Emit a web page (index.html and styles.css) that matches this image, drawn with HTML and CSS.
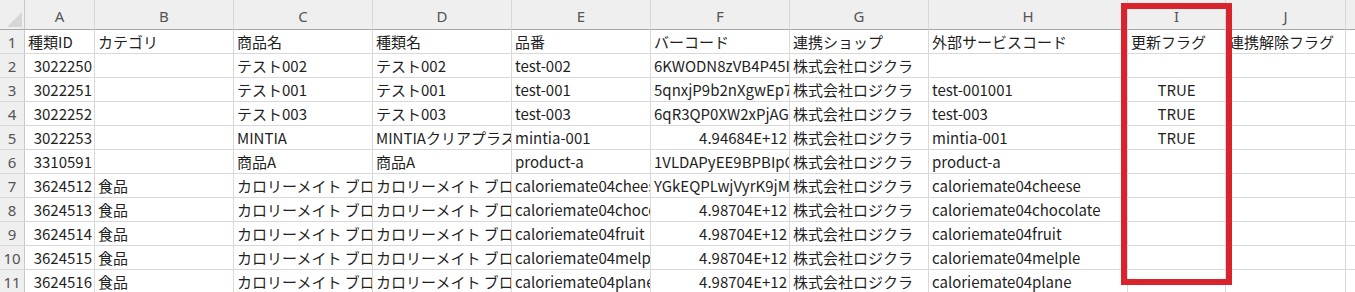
FILE: index.html
```html
<!DOCTYPE html>
<html lang="ja">
<head>
<meta charset="utf-8">
<title>Sheet</title>
<link rel="stylesheet" href="styles.css">
</head>
<body>
<div class="sheet">
  <div class="grid">
    <div class="corner"><svg width="25" height="30" viewBox="0 0 25 30"><polygon points="7,27 22,27 22,12" fill="#d6d6d6"/></svg></div>
    <div class="colh">A</div><div class="colh">B</div><div class="colh">C</div><div class="colh">D</div><div class="colh">E</div><div class="colh">F</div><div class="colh">G</div><div class="colh">H</div><div class="colh">I</div><div class="colh">J</div><div class="colh last"></div>

    <div class="rowh">1</div><div class="c">種類ID</div><div class="c">カテゴリ</div><div class="c">商品名</div><div class="c">種類名</div><div class="c">品番</div><div class="c">バーコード</div><div class="c">連携ショップ</div><div class="c">外部サービスコード</div><div class="c">更新フラグ</div><div class="c">連携解除フラグ</div><div class="c last"></div>

    <div class="rowh">2</div><div class="c num">3022250</div><div class="c"></div><div class="c">テスト002</div><div class="c">テスト002</div><div class="c">test-002</div><div class="c">6KWODN8zVB4P45IqZr</div><div class="c">株式会社ロジクラ</div><div class="c"></div><div class="c"></div><div class="c"></div><div class="c last"></div>

    <div class="rowh">3</div><div class="c num">3022251</div><div class="c"></div><div class="c">テスト001</div><div class="c">テスト001</div><div class="c">test-001</div><div class="c">5qnxjP9b2nXgwEp7aK</div><div class="c">株式会社ロジクラ</div><div class="c">test-001001</div><div class="c ctr">TRUE</div><div class="c"></div><div class="c last"></div>

    <div class="rowh">4</div><div class="c num">3022252</div><div class="c"></div><div class="c">テスト003</div><div class="c">テスト003</div><div class="c">test-003</div><div class="c">6qR3QP0XW2xPjAGmLd</div><div class="c">株式会社ロジクラ</div><div class="c">test-003</div><div class="c ctr">TRUE</div><div class="c"></div><div class="c last"></div>

    <div class="rowh">5</div><div class="c num">3022253</div><div class="c"></div><div class="c">MINTIA</div><div class="c">MINTIAクリアプラス</div><div class="c">mintia-001</div><div class="c num">4.94684E+12</div><div class="c">株式会社ロジクラ</div><div class="c">mintia-001</div><div class="c ctr">TRUE</div><div class="c"></div><div class="c last"></div>

    <div class="rowh">6</div><div class="c num">3310591</div><div class="c"></div><div class="c">商品A</div><div class="c">商品A</div><div class="c">product-a</div><div class="c">1VLDAPyEE9BPBIpQwe</div><div class="c">株式会社ロジクラ</div><div class="c">product-a</div><div class="c"></div><div class="c"></div><div class="c last"></div>

    <div class="rowh">7</div><div class="c num">3624512</div><div class="c">食品</div><div class="c">カロリーメイト ブロック</div><div class="c">カロリーメイト ブロック</div><div class="c">caloriemate04cheese</div><div class="c">YGkEQPLwjVyrK9jMxb</div><div class="c">株式会社ロジクラ</div><div class="c">caloriemate04cheese</div><div class="c"></div><div class="c"></div><div class="c last"></div>

    <div class="rowh">8</div><div class="c num">3624513</div><div class="c">食品</div><div class="c">カロリーメイト ブロック</div><div class="c">カロリーメイト ブロック</div><div class="c">caloriemate04chocolate</div><div class="c num">4.98704E+12</div><div class="c">株式会社ロジクラ</div><div class="c">caloriemate04chocolate</div><div class="c"></div><div class="c"></div><div class="c last"></div>

    <div class="rowh">9</div><div class="c num">3624514</div><div class="c">食品</div><div class="c">カロリーメイト ブロック</div><div class="c">カロリーメイト ブロック</div><div class="c">caloriemate04fruit</div><div class="c num">4.98704E+12</div><div class="c">株式会社ロジクラ</div><div class="c">caloriemate04fruit</div><div class="c"></div><div class="c"></div><div class="c last"></div>

    <div class="rowh">10</div><div class="c num">3624515</div><div class="c">食品</div><div class="c">カロリーメイト ブロック</div><div class="c">カロリーメイト ブロック</div><div class="c">caloriemate04melple</div><div class="c num">4.98704E+12</div><div class="c">株式会社ロジクラ</div><div class="c">caloriemate04melple</div><div class="c"></div><div class="c"></div><div class="c last"></div>

    <div class="rowh">11</div><div class="c num">3624516</div><div class="c">食品</div><div class="c">カロリーメイト ブロック</div><div class="c">カロリーメイト ブロック</div><div class="c">caloriemate04plane</div><div class="c num">4.98704E+12</div><div class="c">株式会社ロジクラ</div><div class="c">caloriemate04plane</div><div class="c"></div><div class="c"></div><div class="c last"></div>
  </div>
  <div class="highlight"></div>
</div>
</body>
</html>
```

FILE: styles.css
```css
html, body {
  margin: 0;
  padding: 0;
  background: #ffffff;
  overflow: hidden;
}

.sheet {
  position: relative;
  width: 1355px;
  height: 292px;
  overflow: hidden;
  font-family: "Noto Sans CJK JP", "Noto Sans", sans-serif;
  font-size: 15px;
  color: #1f1f1f;
}

.grid {
  display: grid;
  grid-template-columns: 25px 70px 139px 139px 139px 139px 139px 139px 199px 98px 120px 1fr;
  grid-template-rows: 30px repeat(11, 24px);
}

.corner {
  background: #efefef;
  border-right: 1px solid #c8c8c8;
  border-bottom: 1px solid #a8a8a8;
  box-sizing: border-box;
  line-height: 0;
}

.colh {
  background: #efefef;
  border-right: 1px solid #d8d8d8;
  border-bottom: 1px solid #a8a8a8;
  box-sizing: border-box;
  display: flex;
  align-items: flex-end;
  justify-content: center;
  padding-bottom: 4px;
  color: #555555;
  font-family: "Noto Sans", "Noto Sans CJK JP", sans-serif;
  font-size: 15px;
  line-height: 18px;
}

.rowh {
  background: #efefef;
  border-right: 1px solid #c8c8c8;
  border-bottom: 1px solid #d8d8d8;
  box-sizing: border-box;
  display: flex;
  align-items: center;
  justify-content: center;
  color: #555555;
  font-family: "Noto Sans", "Noto Sans CJK JP", sans-serif;
  font-size: 15px;
}

.c {
  border-right: 1px solid #d9d9d9;
  border-bottom: 1px solid #d9d9d9;
  box-sizing: border-box;
  display: flex;
  align-items: center;
  padding: 0 0 0 3px;
  white-space: nowrap;
  overflow: hidden;
  line-height: 20px;
}

.c.num {
  justify-content: flex-end;
  padding: 0 2px 0 0;
}

.c.ctr {
  justify-content: center;
  padding: 0;
}

.last {
  border-right: none;
}

.highlight {
  position: absolute;
  left: 1121px;
  top: 3px;
  width: 111px;
  height: 282px;
  box-sizing: border-box;
  border: 6px solid #d9232d;
}
```
